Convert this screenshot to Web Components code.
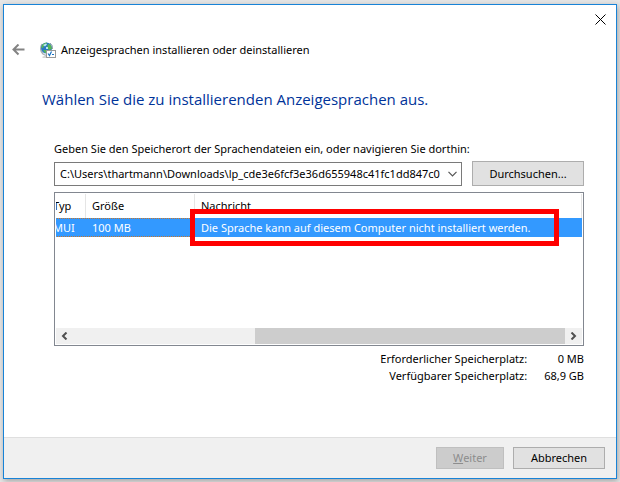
<!DOCTYPE html>
<html lang="de">
<head>
<meta charset="utf-8">
<title>Anzeigesprachen installieren oder deinstallieren</title>
<style>
  body {
    margin: 0;
    min-height: 100vh;
    box-sizing: border-box;
    padding: 4px 3px 3px;
    display: flex;
    background: #e6e6e6;
    font: 11px/17px "Noto Sans", "Open Sans", sans-serif;
    color: #000;
  }
</style>
</head>
<body>
<wizard-window>
  <wizard-title slot="title">Anzeigesprachen installieren oder deinstallieren</wizard-title>
  <span slot="heading">Wählen Sie die zu installierenden Anzeigesprachen aus.</span>
  <path-picker label="Geben Sie den Speicherort der Sprachendateien ein, oder navigieren Sie dorthin:" value="C:\Users\thartmann\Downloads\lp_cde3e6fcf3e36d655948c41fc1dd847c0">Durchsuchen...</path-picker>
  <language-list></language-list>
  <disk-space required="0 MB" available="68,9 GB"></disk-space>
  <wizard-button slot="footer" disabled><u>W</u>eiter</wizard-button>
  <wizard-button slot="footer" class="cancel">Abbrechen</wizard-button>
</wizard-window>

<script>
class WizardWindow extends HTMLElement {
  constructor() {
    super();
    this.attachShadow({ mode: 'open' });
    this.shadowRoot.innerHTML = `
      <style>
        :host {
          flex: 1;
          display: flex;
          flex-direction: column;
          background: white;
          border: 1px solid #1883d7;
          box-shadow: 1px 2px 6px rgba(0, 0, 0, 0.3);
        }
        .bar {
          display: flex;
          justify-content: flex-end;
          padding: 9px 10px 0;
        }
        .bar button {
          display: flex;
          padding: 0;
          border: 0;
          background: none;
        }
        h1 {
          margin: 0;
          padding: 30px 38px 0;
          font-family: "Open Sans", "Noto Sans", sans-serif;
          font-size: 15px;
          font-weight: normal;
          line-height: 22px;
          color: #003399;
        }
        main {
          flex: 1;
          padding: 30px 32px 0 50px;
        }
        footer {
          display: flex;
          justify-content: flex-end;
          gap: 9px;
          padding: 9px 11px;
          border-top: 1px solid #dfdfdf;
          background: #f0f0f0;
        }
        ::slotted(.cancel) { --width: 92px; }
      </style>
      <div class="bar">
        <button aria-label="Schließen">
          <svg width="11" height="11" viewBox="0 0 11 11"><path d="M.5.5l10 10M10.5.5l-10 10" stroke="#000" fill="none"/></svg>
        </button>
      </div>
      <slot name="title"></slot>
      <h1><slot name="heading"></slot></h1>
      <main><slot></slot></main>
      <footer><slot name="footer"></slot></footer>
    `;
  }
}

class WizardTitle extends HTMLElement {
  constructor() {
    super();
    this.attachShadow({ mode: 'open' });
    this.shadowRoot.innerHTML = `
      <style>
        :host {
          display: flex;
          align-items: center;
          padding: 16px 8px 0;
        }
        button {
          display: flex;
          margin-right: 15px;
          padding: 0;
          border: 0;
          background: none;
        }
        .icon { margin-right: 5px; }
      </style>
      <button aria-label="Zurück">
        <svg width="13" height="12" viewBox="0 0 13 12"><path d="M12.5 5.500H1.5M6.5.5l-5 5 5 5" stroke="#838383" stroke-width="2" fill="none"/></svg>
      </button>
      <svg class="icon" width="16" height="16" viewBox="0 0 16 16">
        <path d="M2 15q3-2 6-1v2H3z" fill="#d5d5d5"/>
        <path d="M2 2Q-1 8 3 12q3 2 5 1" stroke="#a9b0b5" stroke-width="1.5" fill="none"/>
        <circle cx="6.5" cy="6" r="5.5" fill="#2b79c2"/>
        <path d="M2 3q2-2.500 5-2.500L6 3 4 4 3 6 1.500 6zM8 2l3 1 1 4-3 1-2-2zM3 8l3 0 1 3-2 0z" fill="#55b557"/>
        <path d="M3 3l3-1.500 1 1-2 2zM6 5l2 0 0 2-2 0z" fill="#b9e6f7"/>
        <path d="M10 1q3 2 2.500 6" stroke="#8c9aa5" fill="none"/>
        <rect x="6.500" y="8.500" width="9" height="7" fill="#fff" stroke="#999"/>
        <path d="M8 11.500l1.500 2 2-4" stroke="#1672c4" stroke-width="1.200" fill="none"/>
        <path d="M12 12.500h2" stroke="#1672c4"/>
      </svg>
      <span><slot></slot></span>
    `;
  }
}

class PathPicker extends HTMLElement {
  constructor() {
    super();
    this.attachShadow({ mode: 'open' });
    this.shadowRoot.innerHTML = `
      <style>
        :host { display: block; }
        label { display: block; margin-bottom: 4px; }
        .row {
          display: flex;
          align-items: flex-end;
          gap: 10px;
        }
        .combo {
          flex: 1;
          min-width: 0;
          display: grid;
          align-items: center;
          border: 1px solid #7a7a7a;
        }
        select, svg { grid-area: 1 / 1; }
        select {
          appearance: none;
          min-width: 0;
          width: 100%;
          height: 22px;
          margin: 0;
          padding: 0 20px 1px 5px;
          border: 0;
          border-radius: 0;
          background: white;
          font: inherit;
          color: inherit;
        }
        svg {
          justify-self: end;
          margin-right: 4px;
          pointer-events: none;
        }
        wizard-button { --height: 25px; --width: 112px; }
      </style>
      <label for="path"></label>
      <div class="row">
        <div class="combo">
          <select id="path"><option></option></select>
          <svg width="9" height="6" viewBox="0 0 9 6"><path d="M.5.8l4 4 4-4" stroke="#555" stroke-width="1.200" fill="none"/></svg>
        </div>
        <wizard-button><slot></slot></wizard-button>
      </div>
    `;
    this.shadowRoot.querySelector('label').textContent = this.getAttribute('label');
    this.shadowRoot.querySelector('option').textContent = this.getAttribute('value');
  }
}

class WizardButton extends HTMLElement {
  constructor() {
    super();
    this.attachShadow({ mode: 'open' });
    this.shadowRoot.innerHTML = `
      <style>
        :host { display: flex; }
        button {
          height: var(--height, 22px);
          min-width: var(--width, 68px);
          padding: 0 8px 1px;
          border: 1px solid #adadad;
          background: #e1e1e1;
          font: inherit;
          color: inherit;
        }
        button:disabled {
          border-color: #bfbfbf;
          background: #cccccc;
          color: #8d8d8d;
        }
      </style>
      <button><slot></slot></button>
    `;
    this.shadowRoot.querySelector('button').disabled = this.hasAttribute('disabled');
  }
}

class LanguageList extends HTMLElement {
  constructor() {
    super();
    this.attachShadow({ mode: 'open' });
    this.shadowRoot.innerHTML = `
      <style>
        :host {
          display: flex;
          flex-direction: column;
          margin-top: 6px;
          border: 1px solid #828790;
          padding: 1px;
        }
        /* scrolled to the right end, the first column is cut off */
        .view {
          display: flex;
          justify-content: flex-end;
          align-items: flex-start;
          height: 134px;
          overflow: hidden;
        }
        table {
          flex: none;
          width: calc(100% + 9px);
          table-layout: fixed;
          border-collapse: separate;
          border-spacing: 0;
        }
        th, td {
          padding: 0 6px;
          text-align: left;
          font-weight: normal;
          white-space: nowrap;
        }
        th {
          height: 22px;
          padding-bottom: 2px;
          border-right: 1px solid #e5e5e5;
        }
        td {
          height: 19px;
          background: #3399ff;
          color: white;
        }
        tbody tr {
          outline: 1px dotted #c7762c;
          outline-offset: -1px;
        }
        .typ { width: 26px; }
        .size { width: 96px; }
        .message { position: relative; }
        .mark {
          position: absolute;
          left: -5px;
          top: -9px;
          width: 359px;
          height: 27px;
          border: 5px solid #ff0000;
        }
        .scroll {
          display: flex;
          align-items: center;
          height: 16px;
          background: #f0f0f0;
        }
        .scroll button {
          display: flex;
          justify-content: center;
          width: 17px;
          padding: 0;
          border: 0;
          background: none;
        }
        .track {
          flex: 1;
          display: flex;
          justify-content: flex-end;
          align-self: stretch;
        }
        .thumb { width: 63%; background: #cdcdcd; }
      </style>
      <div class="view">
        <table>
          <thead>
            <tr><th class="typ">Typ</th><th class="size">Größe</th><th>Nachricht</th></tr>
          </thead>
          <tbody>
            <tr><td>MUI</td><td>100 MB</td><td class="message">Die Sprache kann auf diesem Computer nicht installiert werden.<span class="mark"></span></td></tr>
          </tbody>
        </table>
      </div>
      <div class="scroll">
        <button aria-label="Nach links"><svg width="7" height="8" viewBox="0 0 7 8"><path d="M5.500.5L2 4l3.500 3.500" stroke="#505050" stroke-width="2" fill="none"/></svg></button>
        <div class="track"><div class="thumb"></div></div>
        <button aria-label="Nach rechts"><svg width="7" height="8" viewBox="0 0 7 8"><path d="M1.500.5L5 4 1.500 7.500" stroke="#505050" stroke-width="2" fill="none"/></svg></button>
      </div>
    `;
  }
}

class DiskSpace extends HTMLElement {
  constructor() {
    super();
    this.attachShadow({ mode: 'open' });
    this.shadowRoot.innerHTML = `
      <style>
        :host { display: block; margin-top: 4px; }
        dl {
          display: grid;
          grid-template-columns: 1fr auto;
          column-gap: 17px;
          margin: 0;
          text-align: right;
        }
        dd { margin: 0; }
      </style>
      <dl>
        <dt>Erforderlicher Speicherplatz:</dt><dd>${this.getAttribute('required')}</dd>
        <dt>Verfügbarer Speicherplatz:</dt><dd>${this.getAttribute('available')}</dd>
      </dl>
    `;
  }
}

customElements.define('wizard-window', WizardWindow);
customElements.define('wizard-title', WizardTitle);
customElements.define('wizard-button', WizardButton);
customElements.define('path-picker', PathPicker);
customElements.define('language-list', LanguageList);
customElements.define('disk-space', DiskSpace);
</script>
</body>
</html>
